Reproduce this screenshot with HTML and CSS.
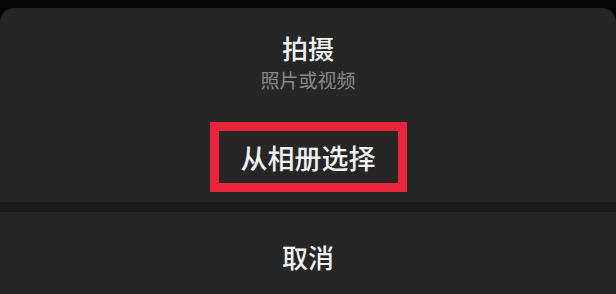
FILE: index.html
```html
<!DOCTYPE html>
<html lang="zh-CN">
<head>
<meta charset="utf-8">
<link rel="stylesheet" href="styles.css">
</head>
<body>
<div class="sheet">
  <div class="group">
    <div class="option capture">
      <div class="title">拍摄</div>
      <div class="sub">照片或视频</div>
    </div>
    <div class="option album">
      <div class="highlight">从相册选择</div>
    </div>
  </div>
  <div class="gap"></div>
  <div class="cancel">取消</div>
</div>
</body>
</html>
```
FILE: styles.css
```css
html, body {
  margin: 0;
  padding: 0;
  background: #050505;
  width: 616px;
  height: 294px;
  overflow: hidden;
}
body {
  font-family: "Noto Sans CJK SC", "Noto Sans", sans-serif;
  color: #f2f2f2;
}
.sheet {
  margin-top: 8px;
  height: 286px;
  display: flex;
  flex-direction: column;
  background: #262626;
  border-radius: 14px 14px 0 0;
}
.group {
  display: flex;
  flex-direction: column;
  align-items: center;
  padding: 25px 0 10px;
}
.capture {
  display: flex;
  flex-direction: column;
  align-items: center;
  gap: 6px;
}
.title {
  font-size: 26px;
  line-height: 30px;
  font-weight: 500;
}
.sub {
  font-size: 19px;
  line-height: 22px;
  color: #8a8a8a;
}
.album {
  margin-top: 31px;
}
.highlight {
  width: 179px;
  height: 52px;
  border: 9px solid #e8253a;
  display: flex;
  align-items: center;
  justify-content: center;
  font-size: 27px;
  font-weight: 500;
}
.gap {
  height: 10px;
  background: #1b1b1b;
}
.cancel {
  flex: 1;
  display: flex;
  justify-content: center;
  padding-top: 30px;
  font-size: 26px;
  line-height: 30px;
  font-weight: 500;
}
```
